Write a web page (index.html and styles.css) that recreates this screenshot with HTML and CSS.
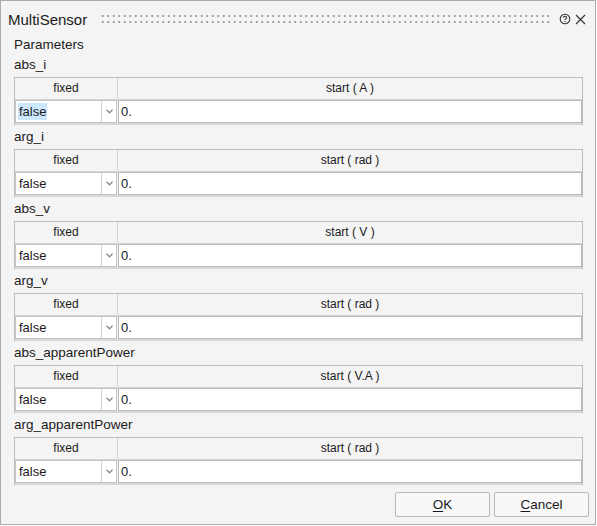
FILE: index.html
```html
<!DOCTYPE html>
<html>
<head>
<meta charset="utf-8">
<link rel="stylesheet" href="styles.css">
</head>
<body>
<div class="window">
  <div class="titlebar">
    <span class="title">MultiSensor</span>
    <span class="grip"></span>
    <svg class="help" width="12" height="12" viewBox="0 0 12 12">
      <circle cx="6" cy="6" r="4.8" fill="none" stroke="#333" stroke-width="1.1"/>
      <path d="M4.4 4.8 Q4.4 3.3 6 3.3 Q7.6 3.3 7.6 4.6 Q7.6 5.5 6.6 5.9 Q6 6.2 6 7" fill="none" stroke="#333" stroke-width="1.1"/>
      <circle cx="6" cy="8.5" r="0.7" fill="#333"/>
    </svg>
    <svg class="close" width="11" height="11" viewBox="0 0 11 11">
      <path d="M1 1 L10 10 M10 1 L1 10" stroke="#333" stroke-width="1.2" fill="none"/>
    </svg>
  </div>
  <div class="content">
    <div class="params">Parameters</div>

    <div class="section">
      <div class="label">abs_i</div>
      <div class="table">
        <div class="head"><div class="hc c1">fixed</div><div class="hc c2">start ( A )</div></div>
        <div class="row">
          <div class="select"><span class="val sel">false</span><span class="arrow"><svg width="7" height="5" viewBox="0 0 7 5"><path d="M0.5 0.8 L3.5 3.8 L6.5 0.8" fill="none" stroke="#8a8a8a" stroke-width="1.3"/></svg></span></div>
          <div class="input">0.</div>
        </div>
      </div>
    </div>

    <div class="section">
      <div class="label">arg_i</div>
      <div class="table">
        <div class="head"><div class="hc c1">fixed</div><div class="hc c2">start ( rad )</div></div>
        <div class="row">
          <div class="select"><span class="val">false</span><span class="arrow"><svg width="7" height="5" viewBox="0 0 7 5"><path d="M0.5 0.8 L3.5 3.8 L6.5 0.8" fill="none" stroke="#8a8a8a" stroke-width="1.3"/></svg></span></div>
          <div class="input">0.</div>
        </div>
      </div>
    </div>

    <div class="section">
      <div class="label">abs_v</div>
      <div class="table">
        <div class="head"><div class="hc c1">fixed</div><div class="hc c2">start ( V )</div></div>
        <div class="row">
          <div class="select"><span class="val">false</span><span class="arrow"><svg width="7" height="5" viewBox="0 0 7 5"><path d="M0.5 0.8 L3.5 3.8 L6.5 0.8" fill="none" stroke="#8a8a8a" stroke-width="1.3"/></svg></span></div>
          <div class="input">0.</div>
        </div>
      </div>
    </div>

    <div class="section">
      <div class="label">arg_v</div>
      <div class="table">
        <div class="head"><div class="hc c1">fixed</div><div class="hc c2">start ( rad )</div></div>
        <div class="row">
          <div class="select"><span class="val">false</span><span class="arrow"><svg width="7" height="5" viewBox="0 0 7 5"><path d="M0.5 0.8 L3.5 3.8 L6.5 0.8" fill="none" stroke="#8a8a8a" stroke-width="1.3"/></svg></span></div>
          <div class="input">0.</div>
        </div>
      </div>
    </div>

    <div class="section">
      <div class="label">abs_apparentPower</div>
      <div class="table">
        <div class="head"><div class="hc c1">fixed</div><div class="hc c2">start ( V.A )</div></div>
        <div class="row">
          <div class="select"><span class="val">false</span><span class="arrow"><svg width="7" height="5" viewBox="0 0 7 5"><path d="M0.5 0.8 L3.5 3.8 L6.5 0.8" fill="none" stroke="#8a8a8a" stroke-width="1.3"/></svg></span></div>
          <div class="input">0.</div>
        </div>
      </div>
    </div>

    <div class="section">
      <div class="label">arg_apparentPower</div>
      <div class="table">
        <div class="head"><div class="hc c1">fixed</div><div class="hc c2">start ( rad )</div></div>
        <div class="row">
          <div class="select"><span class="val">false</span><span class="arrow"><svg width="7" height="5" viewBox="0 0 7 5"><path d="M0.5 0.8 L3.5 3.8 L6.5 0.8" fill="none" stroke="#8a8a8a" stroke-width="1.3"/></svg></span></div>
          <div class="input">0.</div>
        </div>
      </div>
    </div>

    <div class="buttons">
      <div class="btn"><u>O</u>K</div>
      <div class="btn"><u>C</u>ancel</div>
    </div>
  </div>
</div>
</body>
</html>
```

FILE: styles.css
```css
html, body {
  margin: 0;
  padding: 0;
  background: #ffffff;
}
body {
  font-family: "Liberation Sans", Arial, sans-serif;
  font-size: 13.5px;
  color: #1a1a1a;
}
.window {
  width: 594px;
  height: 523px;
  border: 1px solid #ababab;
  background: #f4f4f4;
  display: flex;
  flex-direction: column;
}
.titlebar {
  height: 36px;
  display: flex;
  align-items: center;
  padding: 0 9px 0 7px;
  box-sizing: border-box;
}
.title {
  font-size: 15px;
  color: #1a1a1a;
}
.grip {
  flex: 1;
  height: 12px;
  margin: 0 9px 0 13px;
  background-image: radial-gradient(circle, #9c9c9c 0.9px, transparent 1.15px);
  background-size: 5.5px 6px;
  background-position: 0 0;
}
.help {
  margin-right: 4px;
}
.content {
  flex: 1;
  padding: 0 12px 0 13px;
  display: flex;
  flex-direction: column;
}
.params {
  height: 16px;
  line-height: 16px;
}
.section {
  display: flex;
  flex-direction: column;
}
.label {
  height: 24px;
  line-height: 24px;
}
.table {
  border: 1px solid #bdbdbd;
  height: 46px;
  display: flex;
  flex-direction: column;
}
.head {
  height: 21px;
  display: flex;
  border-bottom: 1px solid #d4d4d4;
  font-size: 12px;
}
.hc {
  line-height: 21px;
  text-align: center;
}
.c1 {
  width: 102px;
  border-right: 1px solid #d4d4d4;
}
.c2 {
  flex: 1;
}
.row {
  flex: 1;
  display: flex;
  border-bottom: 2px solid #d8d8d8;
  font-size: 13px;
}
.select {
  width: 100px;
  display: flex;
  background: #ffffff;
  border: 1px solid #c4c4c4;
}
.val {
  flex: 1;
  line-height: 21px;
  padding-left: 3px;
  align-self: center;
}
.val.sel {
  flex: none;
  width: auto;
  background: #cce8ff;
  height: 17px;
  line-height: 17px;
  padding: 0 1px 0 1px;
  margin-left: 2px;
  margin-right: auto;
}
.arrow {
  width: 14px;
  border-left: 1px solid #d4d4d4;
  display: flex;
  align-items: center;
  justify-content: center;
}
.input {
  flex: 1;
  margin-left: 1px;
  background: #ffffff;
  border: 1px solid #b9b9b9;
  line-height: 21px;
  padding-left: 2px;
}
.buttons {
  display: flex;
  justify-content: flex-end;
  gap: 4px;
  margin-top: 7px;
  margin-right: -6px;
}
.btn {
  width: 93px;
  height: 23px;
  line-height: 23px;
  text-align: center;
  border: 1px solid #b8b8b8;
  border-radius: 2px;
  background: #f8f8f8;
}
.btn u {
  text-decoration-thickness: 1px;
  text-underline-offset: 2px;
}
```
